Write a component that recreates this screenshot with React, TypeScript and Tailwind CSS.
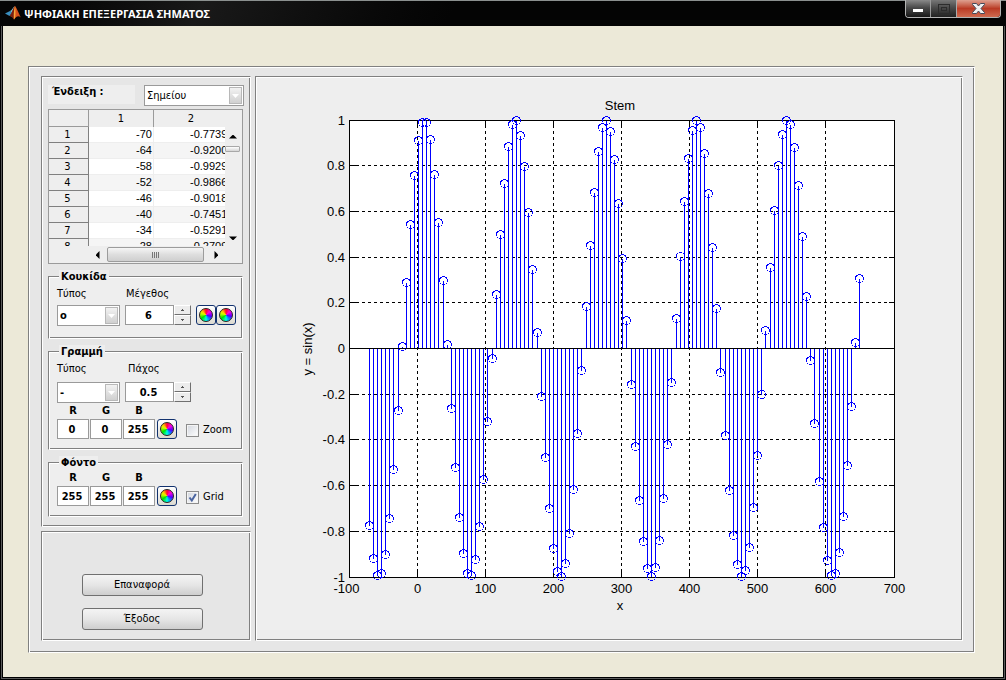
import React, { useState } from 'react';

const etched =
  'border border-t-[#808080] border-l-[#808080] border-r-white border-b-white shadow-[inset_1px_1px_0_#fff,inset_-1px_-1px_0_#808080]';
const uiFont = "font-['DejaVu_Sans_Condensed','DejaVu_Sans',sans-serif]";
const titleFont = "font-['Noto_Sans','DejaVu_Sans',sans-serif]";
const arial = "font-['Liberation_Sans',Arial,sans-serif]";

// y = sin(x), x = -70:6:650
const samples = Array.from({ length: 121 }, (_, i) => {
  const x = -70 + i * 6;
  return { x, y: Math.sin(x) };
});

const PLOT = { left: 93, top: 43, width: 545, height: 457 };
const px = (x: number) => Math.floor(PLOT.left + ((x + 100) / 800) * PLOT.width) + 0.5;
const py = (y: number) => Math.floor(PLOT.top + ((1 - y) / 2) * PLOT.height) + 0.5;
const xTicks = [-100, 0, 100, 200, 300, 400, 500, 600, 700];
const yTicks = [1, 0.8, 0.6, 0.4, 0.2, 0, -0.2, -0.4, -0.6, -0.8, -1];

const StemPlot: React.FC<{ grid: boolean }> = ({ grid }) => {
  const right = px(700);
  const bottom = py(-1);
  const left = px(-100);
  const top = py(1);
  return (
    <svg viewBox="0 0 706 563" className={`block h-full w-full text-[13px] ${arial}`} role="img" aria-label="Stem">
      <rect x={left} y={top} width={right - left} height={bottom - top} fill="#fff" />
      <g stroke="#000" shapeRendering="crispEdges">
        {grid && (
          <g strokeDasharray="3 3">
            {xTicks.slice(1, -1).map((t) => (
              <line key={t} x1={px(t)} x2={px(t)} y1={bottom} y2={top} />
            ))}
            {yTicks.slice(1, -1).map((t) => (
              <line key={t} x1={left} x2={right} y1={py(t)} y2={py(t)} />
            ))}
          </g>
        )}
        {xTicks.map((t) => (
          <path key={t} d={`M${px(t)} ${bottom}v-6M${px(t)} ${top}v6`} />
        ))}
        {yTicks.map((t) => (
          <path key={t} d={`M${left} ${py(t)}h6M${right} ${py(t)}h-6`} />
        ))}
        <rect x={left} y={top} width={right - left} height={bottom - top} fill="none" />
      </g>
      <g stroke="#00f" fill="none" shapeRendering="crispEdges">
        {samples.map((s) => (
          <g key={s.x}>
            <line x1={px(s.x)} x2={px(s.x)} y1={py(0)} y2={py(s.y)} />
            <circle cx={px(s.x)} cy={py(s.y)} r="4" />
          </g>
        ))}
      </g>
      <line x1={left} x2={right} y1={py(0)} y2={py(0)} stroke="#000" shapeRendering="crispEdges" />
      <text x="364" y="33" textAnchor="middle">Stem</text>
      {/* the minus sign hangs to the left of the tick */}
      {xTicks.map((t) => (
        <text key={t} x={t < 0 ? px(t) - 3 : px(t)} y="516" textAnchor="middle">{t}</text>
      ))}
      {yTicks.map((t) => (
        <text key={t} x="89" y={py(t) + 4} textAnchor="end">{t}</text>
      ))}
      <text x="364" y="533" textAnchor="middle">x</text>
      <text transform="translate(56 272) rotate(-90)" textAnchor="middle">y = sin(x)</text>
    </svg>
  );
};

const Combo: React.FC<{ label: string; options: string[]; className: string }> = ({ label, options, className }) => (
  <div className={`relative h-[21px] ${className}`}>
    <select
      aria-label={label}
      className="block h-full w-full appearance-none rounded-none border border-[#9a9a9a] bg-white pl-[2px] leading-none outline-none"
    >
      {options.map((o) => (
        <option key={o}>{o}</option>
      ))}
    </select>
    <span className="pointer-events-none absolute top-[2px] right-[2px] flex h-[17px] w-[13px] items-center justify-center border border-[#b8b8b8] bg-linear-to-b from-[#f2f2f2] to-[#d0d0d0]">
      <svg width="7" height="4" viewBox="0 0 7 4">
        <path d="M0 0h7L3.5 4z" fill="#fff" />
      </svg>
    </span>
  </div>
);

const Spin: React.FC<{ label: string; initial: number; step: number }> = ({ label, initial, step }) => {
  const [value, setValue] = useState(initial);
  const btn =
    'flex h-[10px] w-[17px] items-center justify-center border border-t-white border-l-white border-r-[#707070] border-b-[#707070] bg-[#ececec]';
  return (
    <div className="flex h-5">
      <input
        aria-label={label}
        value={value}
        onChange={(e) => setValue(Number(e.target.value) || 0)}
        className="h-5 w-[49px] border border-[#9a9a9a] bg-white pr-[2px] text-center font-bold outline-none"
      />
      <div className="flex flex-col">
        <button aria-label={`${label} +`} className={btn} onClick={() => setValue(value + step)}>
          <svg width="3" height="2" viewBox="0 0 3 2" shapeRendering="crispEdges">
            <path d="M1 0h1v1h1v1H0V1h1z" fill="#555" />
          </svg>
        </button>
        <button aria-label={`${label} -`} className={btn} onClick={() => setValue(value - step)}>
          <svg width="3" height="2" viewBox="0 0 3 2" shapeRendering="crispEdges">
            <path d="M0 0h3v1H2v1H1V1H0z" fill="#555" />
          </svg>
        </button>
      </div>
    </div>
  );
};

const ColorButton: React.FC<{ label: string }> = ({ label }) => (
  <button
    aria-label={label}
    className="flex h-5 w-5 items-center justify-center rounded-[3px] border border-[#12326e] bg-linear-to-b from-white to-[#dcdad0]"
  >
    <span className="h-[14px] w-[14px] rounded-full border border-[#2a2222] bg-[conic-gradient(#ff0030,#ff00e0_50deg,#5000ff_105deg,#0090ff_145deg,#00ffe0_180deg,#00e000_235deg,#c8ff00_285deg,#ffd000_315deg,#ff0030)]" />
  </button>
);

const Rgb: React.FC<{ group: string; values: number[] }> = ({ group, values }) => (
  <div className="flex gap-px">
    {['R', 'G', 'B'].map((c, i) => (
      <label key={c} className="block w-8 text-center font-bold">
        <span className="block h-4 leading-4">{c}</span>
        <input
          aria-label={`${group} ${c}`}
          defaultValue={values[i]}
          className="block h-5 w-8 border border-[#9a9a9a] bg-white pr-[2px] text-center font-bold outline-none"
        />
      </label>
    ))}
  </div>
);

const Check: React.FC<{ label: string; checked: boolean; onChange: (v: boolean) => void }> = ({
  label,
  checked,
  onChange,
}) => (
  <label className="mb-px ml-[9px] flex h-4 items-center gap-1">
    <span className="relative h-[13px] w-[13px]">
      <input
        type="checkbox"
        checked={checked}
        onChange={(e) => onChange(e.target.checked)}
        className="block h-[13px] w-[13px] appearance-none border border-[#8c8c8c] bg-linear-to-br from-[#d2d6de] to-white shadow-[inset_0_0_0_1px_#f4f4f4]"
      />
      {checked && (
        <svg className="pointer-events-none absolute top-0 left-0" width="13" height="13" viewBox="0 0 13 13">
          <path d="M3.5 6.5l2.3 3L9.8 3" fill="none" stroke="#4a64a0" strokeWidth="2" />
        </svg>
      )}
    </span>
    {label}
  </label>
);

const Group: React.FC<{ title: string; className: string; children: React.ReactNode }> = ({
  title,
  className,
  children,
}) => (
  <fieldset className={`mt-[6px] bg-[#eee] pl-2 ${etched} ${className}`}>
    <legend className="ml-[2px] h-[13px] bg-[#eee] px-[2px] font-bold leading-[13px]">{title}</legend>
    {children}
  </fieldset>
);

const DataTable: React.FC = () => (
  <div className="mt-[3px] h-[155px] w-[195px] border border-[#9a9a9a] bg-[#eee]">
    <div className="flex h-[136px]">
      <div className="w-[176px] overflow-hidden">
        <table className="w-[176px] table-fixed border-separate border-spacing-0">
          <thead>
            <tr className="h-[17px]">
              <th className="w-10 border-r border-b border-[#9a9a9a] p-0" />
              <th className="w-[65px] border-r border-[#9a9a9a] p-0 leading-4 font-normal">1</th>
              <th className="p-0 pl-[3px] leading-4 font-normal">2</th>
            </tr>
          </thead>
          <tbody>
            {samples.slice(0, 8).map((s, i) => (
              <tr key={s.x} className="h-4 odd:bg-white even:bg-[#f5f5f5]">
                <th className="border-r border-b border-[#808080] bg-[#eee] p-0 pr-[2px] leading-[15px] font-normal">
                  {i + 1}
                </th>
                <td className={`border-r border-b border-[#eee] p-0 pr-px text-right leading-[15px] ${arial}`}>{s.x}</td>
                <td className={`overflow-hidden border-b border-[#eee] p-0 pl-9 leading-[15px] ${arial}`}>
                  {s.y.toFixed(4)}
                </td>
              </tr>
            ))}
          </tbody>
        </table>
      </div>
      <div className="flex flex-1 flex-col items-center pt-6 pr-[2px]">
        <svg width="8" height="5" viewBox="0 0 8 5">
          <path d="M0 4.5L3.5 1h1L8 4.5z" />
        </svg>
        <div className="mt-[7px] h-[6px] w-[15px] rounded-[1px] border border-[#a8a8a8] bg-linear-to-b from-white to-[#d4d4d4]" />
        <svg className="mt-auto mb-[5px]" width="8" height="5" viewBox="0 0 8 5">
          <path d="M0 .5L3.5 4h1L8 .5z" />
        </svg>
      </div>
    </div>
    <div className="flex h-[17px] items-center pl-[46px]">
      <svg width="5" height="8" viewBox="0 0 5 8">
        <path d="M4.5 0L1 3.5v1L4.5 8z" />
      </svg>
      <div className="ml-[7px] flex h-[15px] w-[97px] items-center justify-center gap-px rounded-[2px] border border-[#9c9c9c] bg-linear-to-b from-[#f6f6f6] via-[#dedede] to-[#cfcfcf]">
        {[0, 1, 2, 3].map((n) => (
          <span key={n} className="h-[6px] w-px bg-[#777]" />
        ))}
      </div>
      <svg className="ml-[10px]" width="5" height="8" viewBox="0 0 5 8">
        <path d="M.5 0L4 3.5v1L.5 8z" />
      </svg>
    </div>
  </div>
);

const TitleBar: React.FC = () => (
  <header className="relative flex h-[26px] items-start border-t border-[#8b908f] bg-linear-115 from-[#050505] from-5% via-[#191919] via-20% to-[#040404] to-45% pr-[5px] pl-[5px]">
    <svg className="mt-1" width="16" height="16" viewBox="0 0 16 16">
      <path d="M0 8.5L5 6l2 1.6L4.6 11z" fill="#3a8fc0" />
      <path d="M5 6c2-.6 3-3.6 4.8-5L7 7.6z" fill="#79c3d8" />
      <path d="M4.6 11C7 9 8 3 10 1c1.5 1.4 3.4 6.6 5.8 11.5-2.4-2-4-1.500-6.800 2C8 12.500 6.500 11 4.600 11z" fill="#d8501c" />
      <path d="M10 1c-.6 3-.4 8-1 13.500C8 12.500 6.500 11 4.600 11 7 9 8 3 10 1z" fill="#7c1f10" />
      <path d="M10 1c.6 3.500.6 7 .2 11.500L9 14.500c-.6-3-.2-9.500 1-13.500z" fill="#f6a43a" />
    </svg>
    <h1 className={`mt-[5px] ml-[3px] text-[11px] leading-4 font-bold text-white ${titleFont}`}>
      ΨΗΦΙΑΚΗ ΕΠΕΞΕΡΓΑΣΙΑ ΣΗΜΑΤΟΣ
    </h1>
    <div className="-mt-px ml-auto flex h-[18px] overflow-hidden rounded-b-[4px] border border-t-0 border-[#b4b4b4] bg-black">
      <button
        aria-label="Ελαχιστοποίηση"
        className="flex w-[25px] items-end justify-center border-r border-[#999] bg-linear-to-b from-[#8a8a8a] via-[#4a4a4a] via-45% to-[#181818] pb-[5px]"
      >
        <span className="h-[3px] w-[10px] bg-white" />
      </button>
      <button
        aria-label="Μεγιστοποίηση"
        disabled
        className="flex w-[26px] items-center justify-center border-r border-[#aaa] bg-linear-to-b from-[#777] via-[#4a4a4a] via-45% to-[#222]"
      >
        <svg width="12" height="10" viewBox="0 0 12 10" fill="none" stroke="#2c2c2c" shapeRendering="crispEdges">
          <path d="M.5.500h11v9H.500zM3.500 3.500h5v3h-5z" />
        </svg>
      </button>
      <button
        aria-label="Κλείσιμο"
        className="flex w-[43px] items-center justify-center bg-linear-to-b from-[#dda090] via-[#b93a24] via-50% to-[#cf6a50]"
      >
        <svg width="13" height="11" viewBox="0 0 13 11">
          <path
            d="M.5.500h4l2 2.500 2-2.500h4v1L9 5.500l3.500 4v1h-4l-2-2.500-2 2.500h-4v-1L4 5.500.500 1.500z"
            fill="#f0f0f0"
            stroke="#444a5a"
          />
        </svg>
      </button>
    </div>
  </header>
);

export default function App() {
  const [zoom, setZoom] = useState(false);
  const [grid, setGrid] = useState(true);
  const action =
    'h-[22px] w-[121px] rounded-[3px] border border-[#707070] bg-linear-to-b from-[#f4f4f4] from-0% via-[#e6e6e6] via-50% to-[#cecece]';

  return (
    <div className={`flex min-h-screen flex-col bg-black text-[11px] text-black ${uiFont}`}>
      <TitleBar />
      <main className="mx-[3px] mb-[3px] flex flex-1 flex-col bg-[#ece9d8] pt-10 pr-7 pb-6 pl-[25px] shadow-[0_0_0_1px_#000,0_0_0_2px_#5a5a5a]">
        <div className={`flex flex-1 gap-1 bg-[#e6e6e6] pt-[9px] pr-[11px] pb-[11px] pl-3 ${etched}`}>
          <aside className="flex w-[210px] shrink-0 flex-col gap-1">
            <div className={`pt-2 pr-[6px] pb-[9px] pl-[6px] ${etched}`}>
              <div className="flex justify-between">
                <span className="h-[19px] w-[87px] bg-[#eee] pl-1 text-[11px] leading-[14px] font-bold">Ένδειξη :</span>
                <Combo label="Ένδειξη" options={['Σημείου', 'Γραμμής']} className="w-[100px]" />
              </div>
              <DataTable />

              <Group title="Κουκίδα" className="h-[69px] w-[195px]">
                <div className="flex pt-[3px] leading-4">
                  <span className="w-[69px]">Τύπος</span>
                  <span>Μέγεθος</span>
                </div>
                <div className="mt-[3px] flex gap-[5px] font-bold">
                  <Combo label="Τύπος κουκίδας" options={['o', 'x', '+', '*']} className="w-[63px]" />
                  <Spin label="Μέγεθος" initial={6} step={1} />
                  <div className="flex">
                    <ColorButton label="Χρώμα περιγράμματος" />
                    <ColorButton label="Χρώμα γεμίσματος" />
                  </div>
                </div>
              </Group>

              <Group title="Γραμμή" className="h-[105px] w-[195px]">
                <div className="flex pt-[3px] leading-4">
                  <span className="w-[71px]">Τύπος</span>
                  <span>Πάχος</span>
                </div>
                <div className="mt-[5px] flex gap-[5px] font-bold">
                  <Combo label="Τύπος γραμμής" options={['-', '--', ':', '-.']} className="w-[63px]" />
                  <Spin label="Πάχος" initial={0.5} step={0.5} />
                </div>
                <div className="flex items-end">
                  <Rgb group="Γραμμή" values={[0, 0, 255]} />
                  <div className="ml-[2px] flex">
                    <ColorButton label="Χρώμα γραμμής" />
                  </div>
                  <Check label="Zoom" checked={zoom} onChange={setZoom} />
                </div>
              </Group>

              <Group title="Φόντο" className="h-[61px] w-[195px]">
                <div className="flex items-end pt-px">
                  <Rgb group="Φόντο" values={[255, 255, 255]} />
                  <div className="ml-[2px] flex">
                    <ColorButton label="Χρώμα φόντου" />
                  </div>
                  <Check label="Grid" checked={grid} onChange={setGrid} />
                </div>
              </Group>
            </div>

            <div className={`flex flex-1 flex-col items-center gap-3 pt-[42px] pr-2 ${etched}`}>
              <button className={action}>Επαναφορά</button>
              <button className={action}>Έξοδος</button>
            </div>
          </aside>

          <section className={`min-w-0 flex-1 bg-[#eee] ${etched}`}>
            <StemPlot grid={grid} />
          </section>
        </div>
      </main>
    </div>
  );
}
